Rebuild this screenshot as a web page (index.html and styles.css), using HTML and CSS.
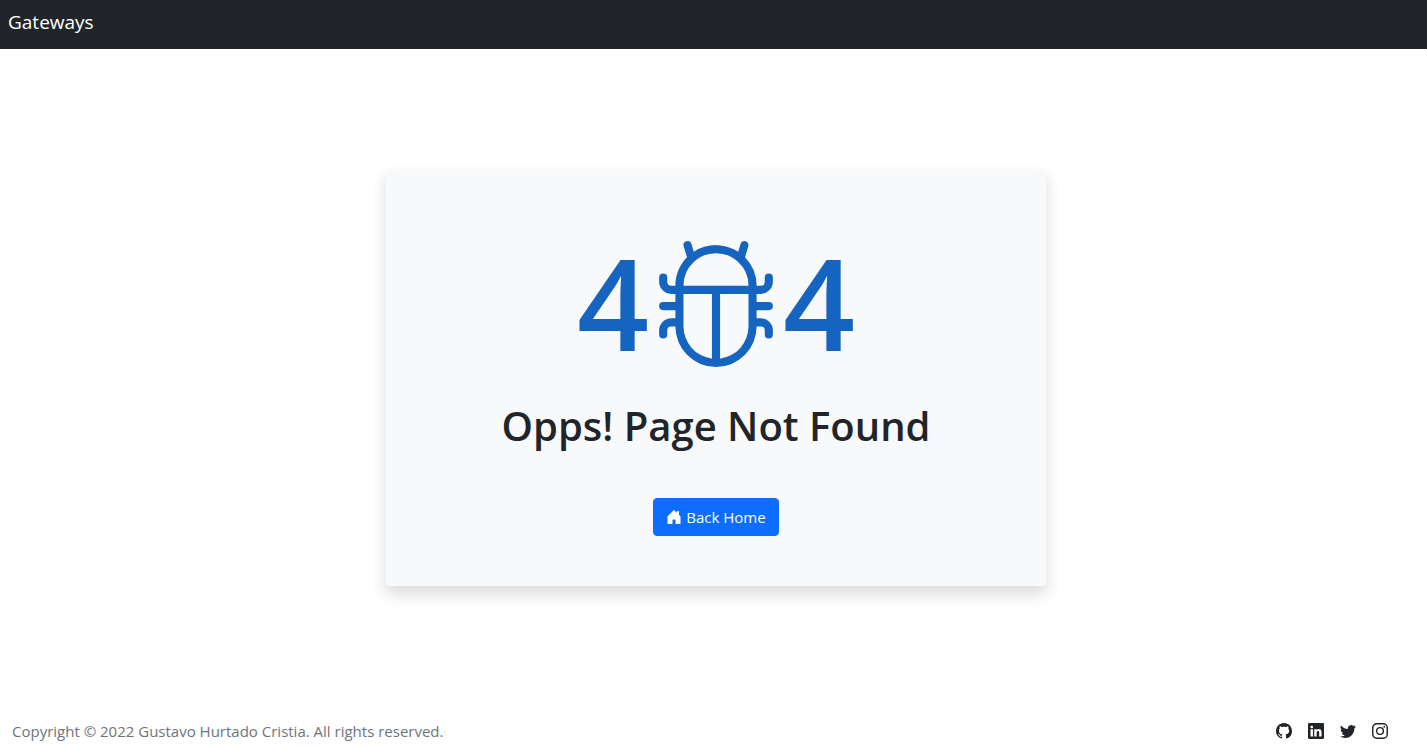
FILE: index.html
```html
<!DOCTYPE html>
<html lang="en">
<head>
<meta charset="utf-8">
<meta name="viewport" content="width=device-width, initial-scale=1">
<title>Gateways</title>
<link rel="stylesheet" href="styles.css">
</head>
<body>
<header class="navbar"><a class="brand" href="#">Gateways</a></header>
<main class="main">
  <section class="card">
    <div class="code">
      <span>4</span>
      <svg class="bug" viewBox="0 0 16 16" fill="currentColor" role="img" aria-label="0"><path d="M4.355.522a.5.5 0 0 1 .623.333l.291.956A4.979 4.979 0 0 1 8 1c1.007 0 1.946.298 2.731.811l.29-.956a.5.5 0 1 1 .957.29l-.41 1.352A4.985 4.985 0 0 1 13 6h.5a.5.5 0 0 0 .5-.5V5a.5.5 0 0 1 1 0v.5A1.5 1.5 0 0 1 13.5 7H13v1h1.5a.5.5 0 0 1 0 1H13v1h.5a1.5 1.5 0 0 1 1.5 1.5v.5a.5.5 0 1 1-1 0v-.5a.5.5 0 0 0-.5-.5H13a5 5 0 0 1-10 0h-.5a.5.5 0 0 0-.5.5v.5a.5.5 0 1 1-1 0v-.5A1.5 1.5 0 0 1 2.5 10H3V9H1.5a.5.5 0 0 1 0-1H3V7h-.5A1.5 1.5 0 0 1 1 5.5V5a.5.5 0 0 1 1 0v.5a.5.5 0 0 0 .5.5H3c0-1.364.547-2.601 1.432-3.503l-.41-1.352a.5.5 0 0 1 .333-.623zM4 7v4a4 4 0 0 0 3.5 3.97V7H4zm4.5 0v7.97A4 4 0 0 0 12 11V7H8.5zM12 6a3.989 3.989 0 0 0-1.334-2.982A3.983 3.983 0 0 0 8 2a3.983 3.983 0 0 0-2.667 1.018A3.989 3.989 0 0 0 4 6h8z"/></svg>
      <span>4</span>
    </div>
    <h1 class="title">Opps! Page Not Found</h1>
    <button class="btn" type="button">
      <svg class="icon" viewBox="0 0 16 16" fill="currentColor" aria-hidden="true"><path d="M6.5 14.5v-3.505c0-.245.25-.495.5-.495h2c.25 0 .5.25.5.5v3.5a.5.5 0 0 0 .5.5h4a.5.5 0 0 0 .5-.5v-7a.5.5 0 0 0-.146-.354L13 5.793V2.5a.5.5 0 0 0-.5-.5h-1a.5.5 0 0 0-.5.5v1.293L8.354 1.146a.5.5 0 0 0-.708 0l-6 6A.5.5 0 0 0 1.500 7.500v7a.5.5 0 0 0 .5.5h4a.5.5 0 0 0 .5-.5z"/></svg>
      <span>Back Home</span>
    </button>
  </section>
</main>
<footer class="footer">
  <p class="copyright">Copyright © 2022 Gustavo Hurtado Cristia. All rights reserved.</p>
  <nav class="social" aria-label="Social links">
    <a href="#" aria-label="GitHub"><svg class="icon" viewBox="0 0 16 16" fill="currentColor"><path d="M8 0C3.580 0 0 3.580 0 8c0 3.540 2.290 6.530 5.470 7.590.4.070.55-.170.55-.380 0-.190-.010-.820-.010-1.490-2.010.370-2.530-.490-2.690-.940-.090-.230-.480-.940-.820-1.130-.280-.150-.680-.520-.010-.530.630-.010 1.080.580 1.230.820.720 1.210 1.870.870 2.330.660.070-.520.280-.870.510-1.070-1.780-.2-3.640-.890-3.640-3.950 0-.870.310-1.590.820-2.150-.080-.2-.360-1.020.080-2.120 0 0 .670-.210 2.200.820.640-.180 1.320-.270 2-.270.680 0 1.360.090 2 .270 1.530-1.040 2.200-.820 2.200-.820.440 1.100.160 1.920.080 2.120.510.560.820 1.270.820 2.150 0 3.070-1.870 3.750-3.650 3.950.290.250.540.730.540 1.480 0 1.070-.010 1.930-.010 2.200 0 .210.150.460.550.380A8.012 8.012 0 0 0 16 8c0-4.420-3.580-8-8-8z"/></svg></a>
    <a href="#" aria-label="LinkedIn"><svg class="icon" viewBox="0 0 16 16" fill="currentColor"><path d="M0 1.146C0 .513.526 0 1.175 0h13.650C15.474 0 16 .513 16 1.146v13.708c0 .633-.526 1.146-1.175 1.146H1.175C.526 16 0 15.487 0 14.854V1.146zm4.943 12.248V6.169H2.542v7.225h2.401zm-1.200-8.212c.837 0 1.358-.554 1.358-1.248-.015-.709-.52-1.248-1.342-1.248-.822 0-1.359.54-1.359 1.248 0 .694.521 1.248 1.327 1.248h.016zm4.908 8.212V9.359c0-.216.016-.432.080-.586.173-.431.568-.878 1.232-.878.869 0 1.216.662 1.216 1.634v3.865h2.401V9.250c0-2.220-1.184-3.252-2.764-3.252-1.274 0-1.845.7-2.165 1.193v.025h-.016a5.540 5.540 0 0 1 .016-.025V6.169h-2.400c.030.678 0 7.225 0 7.225h2.400z"/></svg></a>
    <a href="#" aria-label="Twitter"><svg class="icon" viewBox="0 0 16 16" fill="currentColor"><path d="M5.026 15c6.038 0 9.341-5.003 9.341-9.334 0-.140 0-.282-.006-.422A6.685 6.685 0 0 0 16 3.542a6.658 6.658 0 0 1-1.889.518 3.301 3.301 0 0 0 1.447-1.817 6.533 6.533 0 0 1-2.087.793A3.286 3.286 0 0 0 7.875 6.030a9.325 9.325 0 0 1-6.767-3.429 3.289 3.289 0 0 0 1.018 4.382A3.323 3.323 0 0 1 .640 6.575v.045a3.288 3.288 0 0 0 2.632 3.218 3.203 3.203 0 0 1-.865.115 3.230 3.230 0 0 1-.614-.057 3.283 3.283 0 0 0 3.067 2.277A6.588 6.588 0 0 1 .780 13.580a6.320 6.320 0 0 1-.780-.045A9.344 9.344 0 0 0 5.026 15z"/></svg></a>
    <a href="#" aria-label="Instagram"><svg class="icon" viewBox="0 0 16 16" fill="none" stroke="currentColor" stroke-width="1.440"><rect x=".72" y=".72" width="14.560" height="14.560" rx="4"/><circle cx="8" cy="8" r="3.390"/><circle cx="12.270" cy="3.730" r=".96" fill="currentColor" stroke="none"/></svg></a>
  </nav>
</footer>
</body>
</html>
```
FILE: styles.css
```css
* { box-sizing: border-box; }
body {
  margin: 0;
  min-height: 100vh;
  display: flex;
  flex-direction: column;
  background: #fff;
  color: #212529;
  font: 400 15px/24px "Open Sans", "Noto Sans", sans-serif;
}
.navbar { padding: 7px 8px 12px; background: #212529; }
.brand { display: block; color: #fff; font-size: 19px; line-height: 30px; text-decoration: none; }
.main {
  flex: 1;
  display: flex;
  align-items: center;
  justify-content: center;
  padding: 0 0 8px 5px;
}
.card {
  width: 100%;
  max-width: 660px;
  padding: 48px 48px 50px;
  display: flex;
  flex-direction: column;
  align-items: center;
  background: #f8f9fb;
  border-radius: 4px;
  box-shadow: 0 8px 16px rgba(0, 0, 0, .15);
}
.code {
  display: flex;
  align-items: center;
  gap: 2px;
  color: #1565c0;
  font-size: 126px;
  font-weight: 600;
  line-height: 168px;
}
.bug { width: 130px; height: 130px; }
.title { margin: 12px 0 44px; font-size: 40px; font-weight: 600; line-height: 56px; }
.btn {
  display: flex;
  align-items: center;
  gap: 4px;
  padding: 6px 12px;
  border: 1px solid #0d6efd;
  border-radius: 4px;
  background: #0d6efd;
  color: #fff;
  font: inherit;
}
.icon { display: block; width: 16px; height: 16px; }
.footer {
  display: flex;
  align-items: center;
  justify-content: space-between;
  padding: 4px 39px 4px 12px;
}
.copyright { margin: 0; color: #6c757d; }
.social { display: flex; gap: 16px; }
.social a { color: #212529; }
```
